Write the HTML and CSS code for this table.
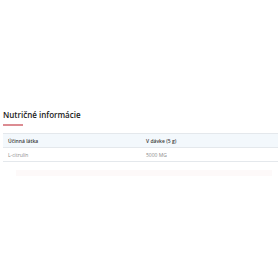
FILE: index.html
```html
<!DOCTYPE html>
<html lang="sk">
<head>
    <meta charset="UTF-8">
    <meta name="viewport" content="width=device-width, initial-scale=1.0">
    <title>Nutričné informácie</title>
    <link rel="stylesheet" href="styles.css">
</head>
<body>
    <section class="nutrition">
        <h2 class="nutrition-title">Nutričné informácie</h2>
        <div class="title-line"></div>
        <table class="nutrition-table">
            <thead>
                <tr>
                    <th>Účinná látka</th>
                    <th>V dávke (5 g)</th>
                </tr>
            </thead>
            <tbody>
                <tr>
                    <td>L-citrulín</td>
                    <td>5000 MG</td>
                </tr>
            </tbody>
        </table>
        <div class="note-bar"></div>
    </section>
</body>
</html>
```

FILE: styles.css
```css
body {
    margin: 0;
    font-family: "Open Sans", Arial, sans-serif;
    background: #fff;
    color: #222;
}

.nutrition {
    padding: 109px 0 0 3px;
}

/* Nadpis sekcie */
.nutrition-title {
    margin: 0;
    font-size: 8px;
    font-weight: 600;
    line-height: 11px;
    color: #1a1a1a;
}

.title-line {
    width: 20px;
    height: 2px;
    margin: 4px 0 0 0;
    background-color: #dc8c92;
}

.nutrition-table {
    width: 100%;
    margin-top: 7px;
    border-collapse: collapse;
    font-size: 5px;
    color: #555;
}

.nutrition-table th,
.nutrition-table td {
    text-align: left;
    padding: 0 5px;
    height: 13px;
    border-top: 1px solid #e4e8ec;
    border-bottom: 1px solid #e4e8ec;
}

.nutrition-table th {
    font-weight: 600;
    color: #3a3a3a;
    background-color: #f3f8fc;
}

.nutrition-table td {
    color: #8a8a8a;
}

.nutrition-table th:first-child,
.nutrition-table td:first-child {
    width: 128px;
}

.note-bar {
    height: 6px;
    margin: 8px 6px 0 13px;
    background-color: #fdf9f9;
}
```
